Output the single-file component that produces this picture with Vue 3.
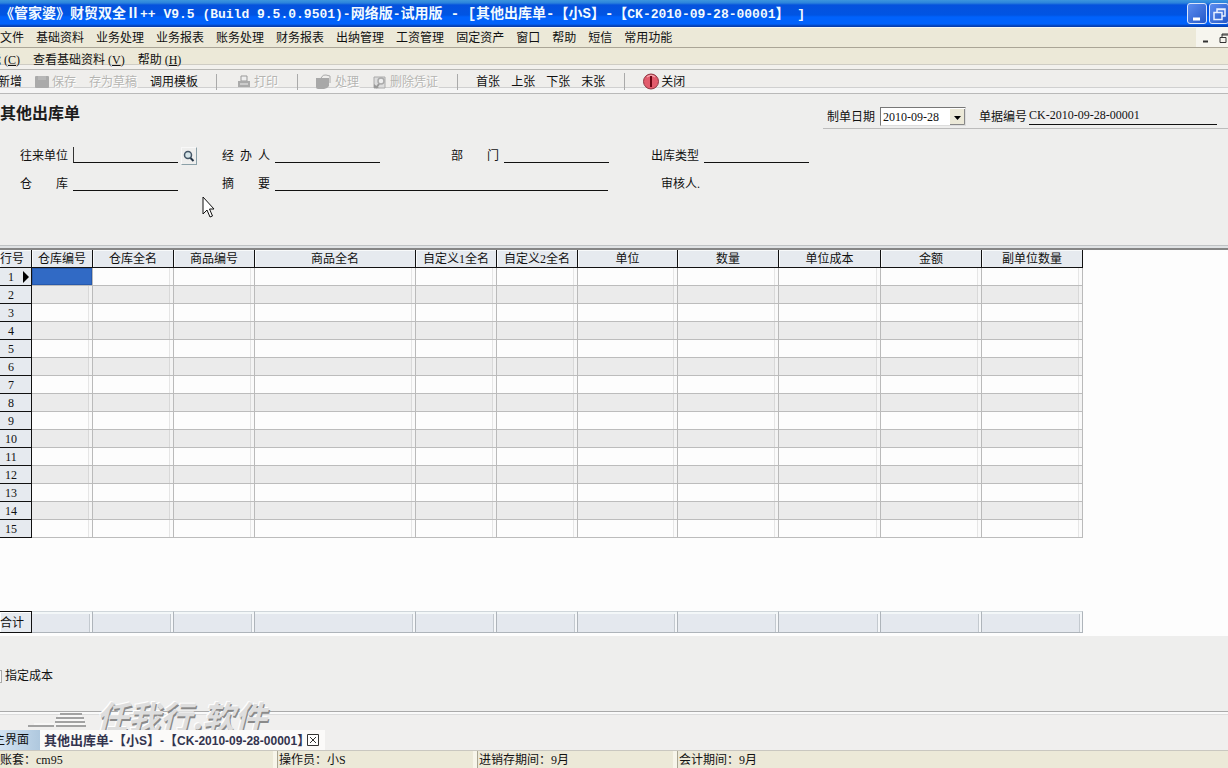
<script setup>
import { ref } from 'vue'

const mainMenu = ['文件', '基础资料', '业务处理', '业务报表', '账务处理', '财务报表', '出纳管理', '工资管理', '固定资产', '窗口', '帮助', '短信', '常用功能']
const columns = [
  { name: '仓库编号', width: 61 },
  { name: '仓库全名', width: 81 },
  { name: '商品编号', width: 81 },
  { name: '商品全名', width: 161 },
  { name: '自定义1全名', width: 81 },
  { name: '自定义2全名', width: 81 },
  { name: '单位', width: 100 },
  { name: '数量', width: 101 },
  { name: '单位成本', width: 102 },
  { name: '金额', width: 101 },
  { name: '副单位数量', width: 101 },
]
const tableWidth = columns.reduce((sum, c) => sum + c.width, 32)
const billNo = ref('CK-2010-09-28-00001')
</script>

<template>
  <div class="window">
    <header class="titlebar">
      <h1>《管家婆》<span class="half"> </span>财贸双全<span class="half"> </span>Ⅱ<span class="half">++ V9.5 (Build 9.5.0.9501)-</span>网络版<span class="half">-</span>试用版<span class="half tail"> - [</span>其他出库单<span class="half tail">-</span>【<span>小</span><span class="half tail">S</span>】<span class="half tail">-</span>【<span class="half">CK-2010-09-28-00001</span>】<span class="half"> ]</span></h1>
      <div class="controls">
        <button class="control" aria-label="最小化"><svg width="20" height="20" viewBox="0 0 20 20"><path d="M5 15h7" stroke="#fff" stroke-width="3" /></svg></button>
        <button class="control" aria-label="还原"><svg width="20" height="20" viewBox="0 0 20 20"><path d="M7 8V5h8v7h-3M4 8.500h8v7H4zM7 5.500h8" fill="none" stroke="#e8f0ff" stroke-width="1.500" /></svg></button>
      </div>
    </header>

    <nav class="menubar">
      <button v-for="m in mainMenu" :key="m">{{ m }}</button>
      <div class="child-controls">
        <button aria-label="最小化子窗口"><svg width="9" height="12" viewBox="0 0 9 12"><path d="M2 9.500h5" stroke="#333" stroke-width="2" /></svg></button>
        <button aria-label="还原子窗口"><svg width="9" height="12" viewBox="0 0 9 12"><path d="M3 5V2h6M3 3h6M1 5.500h6v5H1z" fill="none" stroke="#333" /></svg></button>
      </div>
    </nav>

    <nav class="submenu">
      <button class="cut-menu">功能 (<u>C</u>)</button>
      <button>查看基础资料 (<u>V</u>)</button>
      <button>帮助 (<u>H</u>)</button>
    </nav>

    <div class="toolbar">
      <div class="group first">
        <button class="cut-tool">新增</button>
        <button disabled><svg width="14" height="14" viewBox="0 0 14 14"><rect x="0" y="1" width="14" height="12" rx="1" fill="#aaa" /><path d="M3 1h8v4H3z" fill="#b7b7b7" /></svg>保存</button>
        <button disabled>存为草稿</button>
        <button>调用模板</button>
      </div>
      <div class="group print">
        <button disabled><svg width="14" height="14" viewBox="0 0 14 14"><path d="M4 1h6v5H4z" fill="#eee" stroke="#999" /><path d="M1 6h12v6H1z" fill="#aaa" /><path d="M3 9h8" stroke="#eee" /></svg>打印</button>
      </div>
      <div class="group">
        <button disabled><svg width="16" height="15" viewBox="0 0 16 15"><path d="M0 4h13v8q-2 3-5 3H2q-2 0-2-2z" fill="#a8a8a8" /><path d="M5 4q2-4 5-3l4 1v7" fill="none" stroke="#aaa" /></svg>处理</button>
        <button disabled><svg width="14" height="14" viewBox="0 0 14 14"><path d="M1 2h11v11H1z" fill="#ddd" stroke="#aaa" /><path d="M1 9l5 4H1z" fill="#999" /><circle cx="8" cy="6" r="3" fill="#eee" stroke="#aaa" stroke-width="1.500" /><path d="M6 9l-3 4" stroke="#999" stroke-width="2" /></svg>删除凭证</button>
      </div>
      <div class="group pager">
        <button>首张</button>
        <button>上张</button>
        <button>下张</button>
        <button>末张</button>
      </div>
      <div class="group close">
        <button><svg width="16" height="17" viewBox="0 0 16 17"><circle cx="8" cy="8.500" r="7.500" fill="#e25b6c" stroke="#8c3540" /><path d="M4 4q4-3 8 0" fill="none" stroke="#f4a6ae" stroke-width="1.500" /><path d="M8 3v11" stroke="#6b0714" stroke-width="2" /></svg>关闭</button>
      </div>
    </div>

    <main class="document">
      <form class="bill" @submit.prevent>
        <div class="bill-head">
          <h2>其他出库单</h2>
          <div class="bill-meta">
            <label for="date">制单日期</label>
            <span class="date">
              <select id="date"><option>2010-09-28</option></select>
              <svg class="arrow" width="15" height="16" viewBox="0 0 15 16"><path d="M0 0h15v16H0z" fill="#ece9d8" /><path d="M0 15.500h14.500V0" fill="none" stroke="#888" /><path d="M4 7h7l-3.500 4z" fill="#000" /></svg>
            </span>
            <label for="no">单据编号</label>
            <input id="no" v-model="billNo" class="line number">
          </div>
        </div>
        <div class="fields">
          <div class="field">
            <label for="partner">往来单位</label><input id="partner" class="line caret">
            <button class="lookup" aria-label="查找往来单位"><svg width="14" height="15" viewBox="0 0 14 15"><circle cx="6" cy="6" r="3.500" fill="#d5e4e8" stroke="#456" stroke-width="1.500" /><path d="M8.500 9l3 3" stroke="#234" stroke-width="2" /></svg></button>
          </div>
          <div class="field"><label for="agent">经 办 人</label><input id="agent" class="line"></div>
          <div class="field"><label for="dept">部 门</label><input id="dept" class="line"></div>
          <div class="field"><label for="type">出库类型</label><input id="type" class="line"></div>
          <div class="field"><label for="store">仓 库</label><input id="store" class="line"></div>
          <div class="field wide"><label for="memo">摘 要</label><input id="memo" class="line"></div>
          <div class="field auditor">审核人.</div>
        </div>
        <svg class="cursor" width="13" height="22" viewBox="0 0 13 22"><path d="M1 1v17l4-4 3 7 2.500-1-3-7H12z" fill="#fff" stroke="#111" /></svg>
      </form>

      <section class="sheet">
        <table :style="{ width: tableWidth + 'px' }">
          <colgroup><col class="index-col"><col v-for="c in columns" :key="c.name" :style="{ width: c.width + 'px' }"></colgroup>
          <thead><tr><th class="index" scope="col">行号</th><th v-for="c in columns" :key="c.name" scope="col">{{ c.name }}</th></tr></thead>
          <tbody>
            <tr v-for="n in 15" :key="n">
              <th class="index" scope="row"><span class="num">{{ n }}</span><svg v-if="n === 1" class="marker" width="6" height="12" viewBox="0 0 6 12"><path d="M0 0l6 6-6 6z" /></svg></th>
              <td v-for="(c, i) in columns" :key="c.name" :class="{ selected: n === 1 && i === 0 }"></td>
            </tr>
          </tbody>
        </table>
        <table class="totals" :style="{ width: tableWidth + 'px' }">
          <colgroup><col class="index-col"><col v-for="c in columns" :key="c.name" :style="{ width: c.width + 'px' }"></colgroup>
          <tbody><tr><th class="index" scope="row">合计</th><td v-for="c in columns" :key="c.name"></td></tr></tbody>
        </table>
      </section>

      <section class="options">
        <label><input type="checkbox">指定成本</label>
      </section>
    </main>

    <nav class="tabs">
      <div class="brand">
        <svg width="60" height="20" viewBox="0 0 60 20"><path d="M0 17h26M32 5h22M28 9h28M27 13h30M28 17h30" fill="none" stroke="#a2a2a2" stroke-width="2" /><path d="M6 15h20M30 7h24M28 11h28M27 15h30" stroke="#fff" fill="none" /></svg>
        <span>任我行.软件</span>
      </div>
      <button class="tab home">主界面</button>
      <div class="tab active">
        <span class="tab-name"><span class="cjk">其他出库单</span>-<span class="cjk">【小</span>S<span class="cjk">】</span>-<span class="cjk">【</span>CK-2010-09-28-00001<span class="cjk">】</span></span>
        <button aria-label="关闭标签"><svg width="12" height="12" viewBox="0 0 12 12"><path d="M.5.5h11v11H.5zM3 3l6 6M9 3l-6 6" fill="#fff" stroke="#333" /></svg></button>
      </div>
    </nav>

    <footer class="status">
      <span>账套：cm95</span>
      <span>操作员：小S</span>
      <span>进销存期间：9月</span>
      <span>会计期间：9月</span>
    </footer>
  </div>
</template>

<style>
body { margin: 0; }
</style>

<style scoped>
.window {
  display: flex;
  flex-direction: column;
  height: 100vh;
  overflow: hidden;
  background: #eeeeed;
  color: #111;
  font: 12px/16px "Liberation Serif", "Noto Sans CJK SC", serif;
}
.window * { box-sizing: border-box; }
button {
  display: flex;
  align-items: center;
  padding: 0;
  border: 0;
  background: none;
  color: inherit;
  font: inherit;
  white-space: nowrap;
}
input, select { font: inherit; color: inherit; }
svg { display: block; flex: none; }

.titlebar {
  display: flex;
  align-items: center;
  justify-content: space-between;
  flex: none;
  height: 27px;
  background: linear-gradient(#3d96de 0, #2a82dc 3px, #0552dd 5px, #0054e3 15px, #0062fc 17px, #0062fc 24px, #063fb0 26px);
  color: #f2faff;
  overflow: hidden;
}
.titlebar h1 {
  margin: 0;
  font: bold 14px/26px "Noto Sans CJK SC", sans-serif;
  white-space: pre;
}
.half { font-family: "Liberation Mono", monospace; font-size: 13px; }
.tail { font-size: 14px; }
.controls { display: flex; gap: 2px; margin-right: -1px; }
.control {
  width: 20px;
  height: 21px;
  border: 1px solid #dbe6fb;
  border-radius: 3px;
  background: linear-gradient(135deg, #5c8df0, #2458c8);
  overflow: hidden;
}

.menubar {
  display: flex;
  gap: 12px;
  flex: none;
  height: 21px;
  border-top: 1px solid #f6f8f4;
  border-bottom: 1px solid #aaa596;
  background: #ece9d8;
}
.child-controls { display: flex; gap: 9px; margin-left: auto; padding-left: 5px; background: #f6f5ee; }
.submenu {
  display: flex;
  gap: 13px;
  flex: none;
  height: 22px;
  padding-top: 2px;
  border-bottom: 1px solid #b8b8b4;
  box-shadow: inset 0 -4px #f2f1ed, inset 0 -5px #cfcdc4;
  background: #ece9d8;
}
.submenu .cut-menu { margin-left: -23px; }
.toolbar {
  display: flex;
  align-items: center;
  flex: none;
  height: 24px;
  border-bottom: 1px solid #b9b9b9;
  box-shadow: inset 0 -5px #f5f5f5, inset 0 -6px #d0d0d0;
  background: #efeeec;
}
.group { display: flex; gap: 14px; padding: 0 19px 0 18px; border-left: 1px solid #aaa; }
.group button { gap: 3px; }
.group button:disabled { color: #b5b5b2; text-shadow: 1px 1px #fff; }
.group.first { gap: 13px; padding: 0 18px 0 0; border-left: 0; }
.group.print { padding-left: 20px; }
.group.pager { gap: 11px; }
.group.close button { gap: 2px; }
.cut-tool { margin-left: -2px; }

.document { display: flex; flex-direction: column; flex: 1; min-height: 0; }
.bill {
  position: relative;
  flex: none;
  height: 156px;
  border-bottom: 2px solid #858585;
  box-shadow: inset 0 -2px #dfe2e4, inset 0 -3px #bfc2c4;
}
.bill-head { display: flex; justify-content: space-between; height: 50px; }
.bill h2 { margin: 6px 0 0; font: bold 16px/24px "Noto Sans CJK SC", sans-serif; color: #1c1c1c; }
.bill-meta {
  display: flex;
  align-items: center;
  height: 24px;
  margin-top: 11px;
  padding: 0 11px 0 4px;
  border-bottom: 1px solid #bcbcbc;
}
.date { position: relative; display: flex; margin: 0 13px 0 5px; }
.date select {
  appearance: none;
  width: 86px;
  height: 19px;
  padding: 0 0 0 2px;
  border: 1px solid;
  border-color: #777 #ddd #ddd #777;
  border-radius: 0;
  background: #fff;
}
.arrow { position: absolute; top: 2px; right: 1px; pointer-events: none; }
.line {
  width: 105px;
  height: 16px;
  padding: 0 0 2px;
  border: 0;
  border-bottom: 1px solid #111;
  border-radius: 0;
  outline: 0;
  background: transparent;
}
.number { width: 188px; margin-left: 2px; }
.fields {
  display: grid;
  grid-template-columns: 202px 229px 200px 1fr;
  row-gap: 12px;
  margin-top: 3px;
  padding-left: 20px;
}
.field { display: flex; height: 16px; line-height: 18px; }
.field label { width: 48px; margin-right: 5px; text-align-last: justify; }
.field.wide { grid-column: span 2; }
.field.wide .line { width: 333px; }
.auditor { padding-left: 10px; }
.caret { border-left: 1px solid #333; }
.lookup { width: 16px; height: 18px; margin-left: 3px; border: 1px solid; border-color: #f8f8f8 #8ba0a8 #8ba0a8 #f8f8f8; }
.cursor { position: absolute; left: 202px; top: 102px; }

.sheet { display: flex; flex-direction: column; justify-content: space-between; flex: 1; min-height: 0; padding-bottom: 3px; background: #fdfdfd; }
table { table-layout: fixed; border-collapse: separate; border-spacing: 0; }
.index-col { width: 32px; }
th {
  height: 18px;
  padding: 0;
  border-right: 1px solid #111;
  border-bottom: 1px solid #111;
  background: #e6eaef;
  font-weight: normal;
  line-height: 16px;
  white-space: nowrap;
  overflow: hidden;
}
thead th { padding-top: 1px; border-bottom-width: 1px; box-shadow: inset 1px 1px #f8fafb; }
.index { text-align: left; position: relative; }
.num { display: block; width: 22px; text-align: center; }
.marker { position: absolute; left: 23px; top: 3px; }
td {
  height: 18px;
  padding: 0;
  border-right: 1px solid #bababa;
  border-bottom: 1px solid #bcbcbc;
  box-shadow: inset -3px 0 #fbfbfb, inset -4px 0 #e6e6e6;
}
tbody tr:nth-child(even) td { background: #ebebeb; box-shadow: inset -3px 0 #f2f2f2, inset -4px 0 #d8d8d8; }
tbody td.selected { background: #316ac5; box-shadow: inset 0 0 0 1px #2659ad; }
.totals th { height: 22px; padding-top: 1px; border-top: 1px solid #111; box-shadow: inset 1px 1px #fff; }
.totals td { background: #e4e8ee; border-color: #aeb4ba; border-top: 1px solid #cfd6da; box-shadow: inset 0 2px #f3f7f8, inset -2px 0 #f5f7f9, inset -3px 0 #c3c9cf; }

.options { flex: none; height: 76px; padding-top: 32px; border-bottom: 1px solid #aaa; }
.options label { display: flex; align-items: center; gap: 3px; }
.options input { appearance: none; width: 13px; height: 13px; margin: 0 0 0 -11px; border: 1px solid #aaa; background: #f6f6f6; }

.tabs {
  position: relative;
  display: flex;
  align-items: flex-end;
  flex: none;
  height: 39px;
  border-bottom: 1px solid #c9c7c0;
  box-shadow: inset 0 2px #fafafa, inset 0 3px #dcdcdc;
  background: #f0efee;
}
.tab { position: relative; display: flex; align-items: center; height: 20px; }
.home { width: 40px; background: linear-gradient(90deg, #d3e4f3, #afc8de); text-indent: -7px; }
.active { padding: 0 6px 0 4px; background: #fbfaf9; color: #34344f; font: bold 12px/16px "Liberation Sans", "Noto Sans CJK SC", sans-serif; white-space: nowrap; }
.active button { margin-left: -3px; }
.cjk { font-family: "Noto Sans CJK SC", sans-serif; font-size: 13px; }
.brand { position: absolute; left: 28px; top: -11px; display: flex; align-items: flex-end; gap: 8px; height: 28px; }
.brand span {
  color: #dedede;
  font: italic bold 32px/28px "Noto Sans CJK SC", sans-serif;
  text-shadow: 1px 2px #8a8a8a, -1px -1px #fff;
  white-space: nowrap;
}

.status { display: flex; flex: none; height: 17px; background: #ece9d8; line-height: 18px; overflow: hidden; }
.status span { width: 200px; padding-left: 1px; border-left: 1px solid #aaa694; box-shadow: -4px 0 #f7f5ea; }
.status span:first-child { width: 277px; padding-left: 0; border-left: 0; }
.status span:last-child { flex: 1; }
</style>
